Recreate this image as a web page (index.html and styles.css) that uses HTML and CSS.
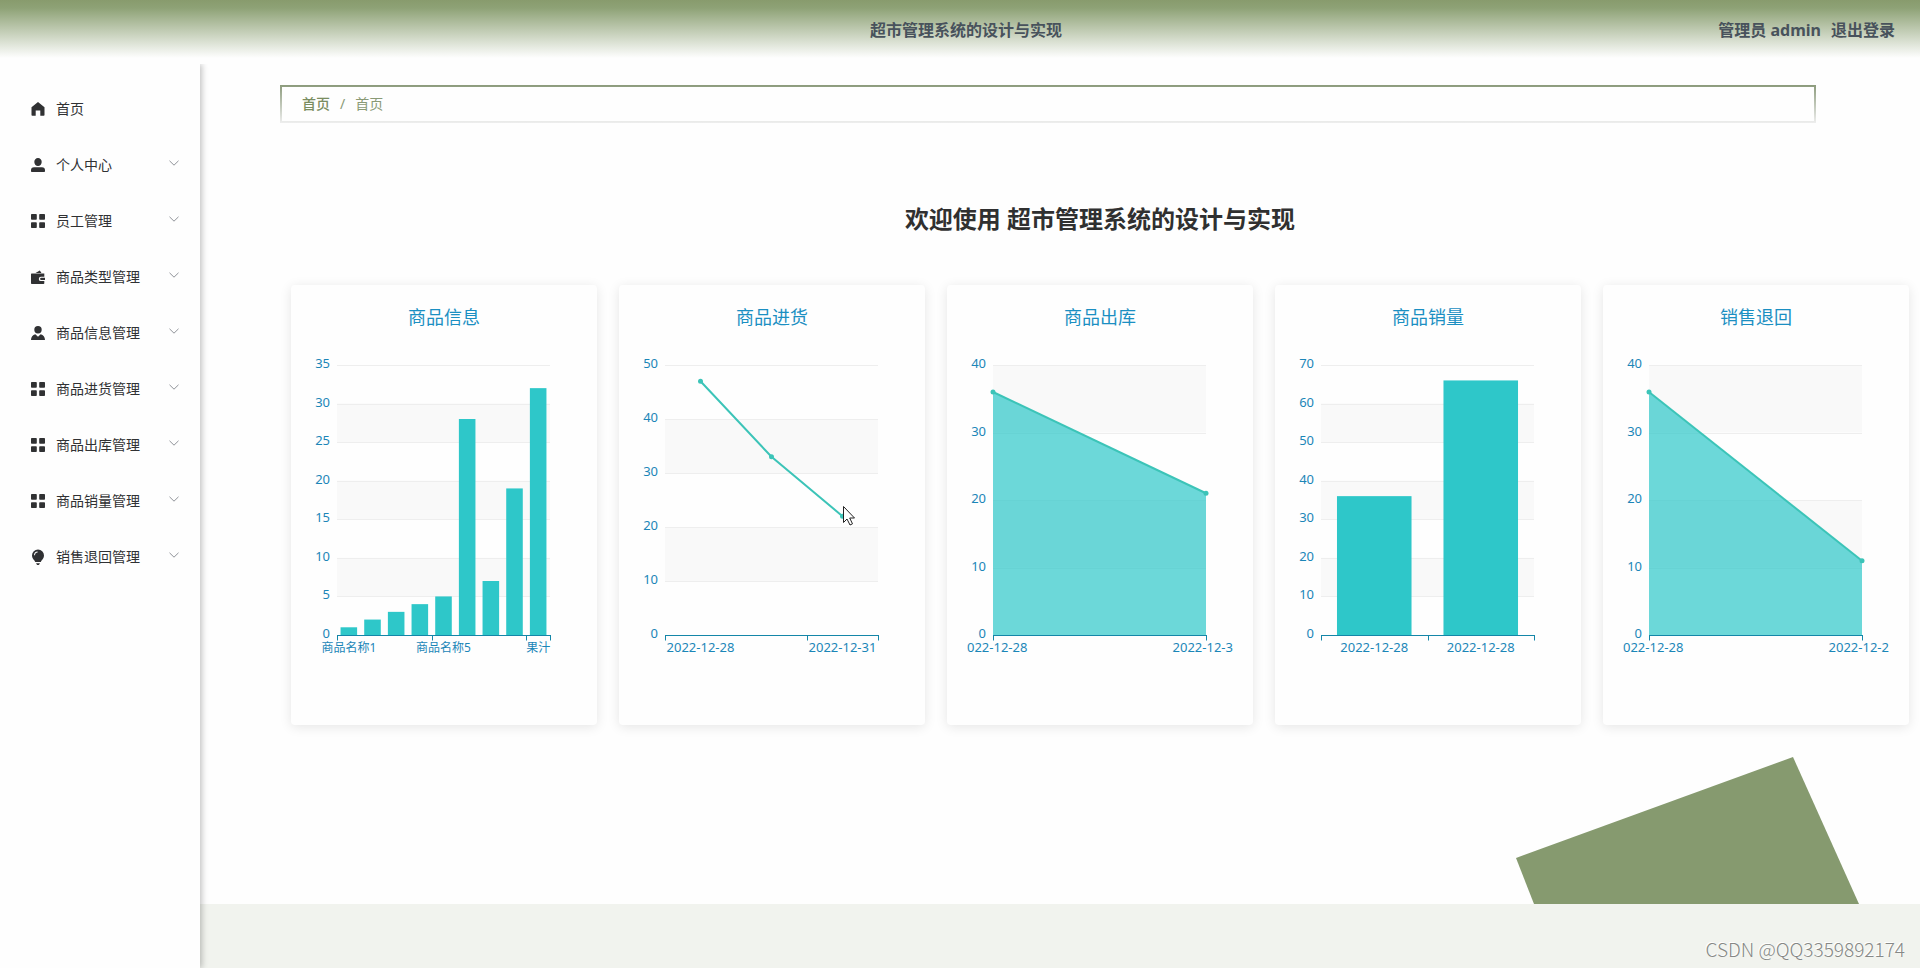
FILE: index.html
```html
<!DOCTYPE html>
<html lang="zh-CN">
<head>
<meta charset="utf-8">
<meta name="viewport" content="width=device-width, initial-scale=1">
<title>超市管理系统的设计与实现</title>
<link rel="stylesheet" href="styles.css">
</head>
<body>
<svg class="sprite" aria-hidden="true">
  <symbol id="i-home" viewBox="0 0 16 16"><path d="M8 1 1.500 6.200V14a.8.8 0 0 0 .8.8h3.400V9.600h4.600v5.200h3.400a.8.8 0 0 0 .8-.8V6.200z"/></symbol>
  <symbol id="i-user" viewBox="0 0 16 16"><path d="M8 1a3.7 3.7 0 0 1 3.7 3.9C11.700 7.200 10 9 8 9S4.300 7.200 4.300 4.900A3.700 3.700 0 0 1 8 1zM4 10.200h8a3 3 0 0 1 3 3v1a.8.8 0 0 1-.8.8H1.800a.8.800 0 0 1-.8-.8v-1a3 3 0 0 1 3-3z"/></symbol>
  <symbol id="i-grid" viewBox="0 0 16 16"><path d="M1.800 1h4.200a.8.8 0 0 1 .8.8v4.200a.8.8 0 0 1-.8.8H1.800a.8.8 0 0 1-.8-.8V1.800A.8.8 0 0 1 1.800 1zm8.200 0h4.200a.8.8 0 0 1 .8.800v4.200a.8.8 0 0 1-.8.800H10a.8.8 0 0 1-.8-.8V1.800A.8.8 0 0 1 10 1zM1.800 9.200h4.200a.8.8 0 0 1 .8.800v4.200a.8.8 0 0 1-.8.800H1.800a.8.8 0 0 1-.8-.8V10a.8.8 0 0 1 .8-.8zm8.200 0h4.200a.8.8 0 0 1 .8.800v4.200a.8.8 0 0 1-.8.800H10a.8.8 0 0 1-.8-.8V10a.8.8 0 0 1 .8-.8z"/></symbol>
  <symbol id="i-wallet" viewBox="0 0 16 16"><path d="M5.500 4 9.800 1.600 11.500 4zM1.600 4.600H14.300V7.700H11a2.200 2.200 0 0 0 0 4.400h3.300v2.100a.8.8 0 0 1-.8.8H1.800a.8.8 0 0 1-.8-.8V5.200a.6.6 0 0 1 .6-.6zM11.200 8.800H15V11h-3.800a1.100 1.100 0 0 1 0-2.200z"/></symbol>
  <symbol id="i-staff" viewBox="0 0 16 16"><path d="M8 1a3.700 3.700 0 0 1 3.700 3.700A3.700 3.700 0 0 1 8 8.400a3.700 3.700 0 0 1-3.700-3.700A3.700 3.700 0 0 1 8 1zM5.300 9.200 8 11.800l2.700-2.600c2.600.8 4.300 2.800 4.300 5.800H1c0-3 1.700-5 4.300-5.800z"/></symbol>
  <symbol id="i-bulb" viewBox="0 0 16 16"><path fill-rule="evenodd" d="M8 .5a6 6 0 0 1 6 6c0 2.500-1.500 3.800-2.600 5.300L10.800 13H5.200l-.6-1.200C3.500 10.300 2 9 2 6.500a6 6 0 0 1 6-6zM4 6.200h1C5.100 4.500 6 3.600 7.600 3.500v-1C5.400 2.600 4 4 4 6.200zM6.200 14.200h3.600v.6L8.800 16H7.200l-1-1.200z"/></symbol>
  <symbol id="i-down" viewBox="0 0 12 12"><path d="M1.500 3.800 6 8.200l4.500-4.400" fill="none" stroke="currentColor"/></symbol>
</svg>

<header class="topbar">
  <div class="topbar-title">超市管理系统的设计与实现</div>
  <div class="topbar-user">
    <span>管理员 admin</span>
    <a class="logout" href="#">退出登录</a>
  </div>
</header>

<div class="layout">
  <nav class="sidebar" aria-label="主菜单">
    <a class="menu-item" href="#"><svg class="menu-icon"><use href="#i-home"/></svg><span class="menu-text">首页</span></a>
    <button class="menu-item" type="button"><svg class="menu-icon"><use href="#i-user"/></svg><span class="menu-text">个人中心</span><svg class="menu-arrow"><use href="#i-down"/></svg></button>
    <button class="menu-item" type="button"><svg class="menu-icon"><use href="#i-grid"/></svg><span class="menu-text">员工管理</span><svg class="menu-arrow"><use href="#i-down"/></svg></button>
    <button class="menu-item" type="button"><svg class="menu-icon"><use href="#i-wallet"/></svg><span class="menu-text">商品类型管理</span><svg class="menu-arrow"><use href="#i-down"/></svg></button>
    <button class="menu-item" type="button"><svg class="menu-icon"><use href="#i-staff"/></svg><span class="menu-text">商品信息管理</span><svg class="menu-arrow"><use href="#i-down"/></svg></button>
    <button class="menu-item" type="button"><svg class="menu-icon"><use href="#i-grid"/></svg><span class="menu-text">商品进货管理</span><svg class="menu-arrow"><use href="#i-down"/></svg></button>
    <button class="menu-item" type="button"><svg class="menu-icon"><use href="#i-grid"/></svg><span class="menu-text">商品出库管理</span><svg class="menu-arrow"><use href="#i-down"/></svg></button>
    <button class="menu-item" type="button"><svg class="menu-icon"><use href="#i-grid"/></svg><span class="menu-text">商品销量管理</span><svg class="menu-arrow"><use href="#i-down"/></svg></button>
    <button class="menu-item" type="button"><svg class="menu-icon"><use href="#i-bulb"/></svg><span class="menu-text">销售退回管理</span><svg class="menu-arrow"><use href="#i-down"/></svg></button>
  </nav>

  <div class="page">
    <main class="content">
      <svg class="decoration" viewBox="0 0 343 147" aria-hidden="true"><path d="M0 101 277 0 343 147H18z"/></svg>
      <nav class="breadcrumb" aria-label="面包屑">
        <a class="crumb-link" href="#">首页</a>
        <span class="crumb-sep">/</span>
        <span class="crumb-current">首页</span>
      </nav>
      <h1 class="welcome">欢迎使用 超市管理系统的设计与实现</h1>
      <section class="cards">
        <article class="card" data-chart="info"><h2 class="card-title">商品信息</h2></article>
        <article class="card" data-chart="purchase"><h2 class="card-title">商品进货</h2></article>
        <article class="card" data-chart="outbound"><h2 class="card-title">商品出库</h2></article>
        <article class="card" data-chart="sales"><h2 class="card-title">商品销量</h2></article>
        <article class="card" data-chart="returns"><h2 class="card-title">销售退回</h2></article>
      </section>
    </main>
    <footer class="footer">CSDN @QQ3359892174</footer>
  </div>
</div>
<script src="charts.js"></script>
</body>
</html>
```

FILE: styles.css
```css
* {
  box-sizing: border-box;
}

body {
  display: flex;
  flex-direction: column;
  min-height: 100vh;
  margin: 0;
  background: #fefefe;
  color: #333;
  font-family: "Noto Sans", "Noto Sans CJK SC", sans-serif;
  font-size: 14px;
}

a {
  color: inherit;
  text-decoration: none;
}

.sprite {
  position: absolute;
  width: 0;
  height: 0;
}

.topbar {
  display: grid;
  grid-template-columns: 1fr auto 1fr;
  align-items: center;
  height: 60px;
  padding: 0 25px 2px 37px;
  background: linear-gradient(to bottom, #889b6d 0, #8ea276 8px, #fefefe 58px);
  color: #48525c;
  font-size: 16px;
  font-weight: 700;
}

.topbar-title {
  grid-column: 2;
}

.topbar-user {
  display: flex;
  justify-content: flex-end;
  gap: 10px;
}

.layout {
  display: flex;
  flex: 1;
  padding-top: 4px;
}

.sidebar {
  z-index: 1;
  flex: 0 0 200px;
  padding-top: 17px;
  background: #fefefe;
  box-shadow: 2px 0 6px rgba(0, 0, 0, 0.24);
  clip-path: inset(0 -12px 0 0);
}

.menu-item {
  display: flex;
  align-items: center;
  width: 100%;
  height: 56px;
  padding: 0 20px 0 30px;
  border: 0;
  background: none;
  color: #303133;
  font: inherit;
  cursor: pointer;
}

.menu-icon {
  width: 16px;
  height: 16px;
  margin-right: 10px;
  fill: currentColor;
}

.menu-text {
  padding-bottom: 2px;
}

.menu-arrow {
  width: 12px;
  height: 12px;
  margin: 0 0 4px auto;
  color: #909399;
}

.page {
  display: flex;
  flex: 1;
  flex-direction: column;
  min-width: 0;
}

.content {
  position: relative;
  flex: 1;
  padding: 21px 0 0 80px;
}

.decoration {
  position: absolute;
  right: 61px;
  bottom: 0;
  width: 343px;
  fill: #869a6f;
}

.breadcrumb {
  display: flex;
  align-items: center;
  gap: 10px;
  height: 38px;
  margin-right: 104px;
  padding: 0 20px 2px;
  border: 2px solid;
  border-image: linear-gradient(to bottom, #8c9b7c, #eee) 2;
  color: #8a9a76;
}

.crumb-link {
  color: #7a8d60;
  font-weight: 500;
}

.welcome {
  margin: 77px 0 47px;
  color: #303030;
  font-size: 24px;
  font-weight: 700;
  line-height: 38px;
  text-align: center;
}

.cards {
  position: relative;
  display: grid;
  grid-template-columns: repeat(5, minmax(0, 1fr));
  gap: 22px;
  padding: 0 11px 40px;
}

.card {
  padding: 20px;
  border-radius: 4px;
  background: #fefefe;
  box-shadow: 0 2px 12px rgba(0, 0, 0, 0.1);
}

.card-title {
  margin: 0 0 2px;
  color: #1b8fc2;
  font-size: 18px;
  font-weight: 400;
  line-height: 24px;
  text-align: center;
}

.chart {
  display: block;
  width: 100%;
}

.split-area {
  fill: #f9f9f9;
}

.split-line {
  stroke: #eee;
}

.axis-line {
  fill: none;
  stroke: #1486a8;
}

.axis-label {
  fill: #1b86b8;
  font-size: 13px;
}

.axis-name {
  font-size: 12px;
}

.bar {
  fill: #2ec7c9;
}

.area {
  fill: #2ec7c9;
  fill-opacity: 0.7;
}

.line {
  fill: none;
  stroke: #3cc4b8;
  stroke-width: 2;
}

.point {
  fill: #3cc4b8;
}

.pointer {
  fill: #fff;
  stroke: #222;
}

.footer {
  display: flex;
  align-items: center;
  justify-content: flex-end;
  height: 64px;
  padding: 24px 15px 0 0;
  background: #f1f3ee;
  color: #868886;
  font-family: "Noto Sans CJK SC", sans-serif;
  font-size: 19px;
  font-weight: 300;
  text-shadow: -1px -1px 0 #fff;
}
```

FILE: charts.js
```js
const NS = 'http://www.w3.org/2000/svg';
const VIEW = { width: 266, height: 374 };
const PLOT = { left: 26, right: 239, top: 34, bottom: 304 };

const charts = {
  info: {
    type: 'bar', max: 35, step: 5, values: [1, 2, 3, 4, 5, 28, 7, 19, 32],
    labels: { 0: '商品名称1', 4: '商品名称5', 8: '果汁' }, ticks: [0, 4, 8, 9], names: true
  },
  purchase: {
    type: 'line', max: 50, step: 10, values: [47, 33, 22],
    labels: { 0: '2022-12-28', 2: '2022-12-31' }, ticks: [0, 2, 3], pointer: [204, 175]
  },
  outbound: {
    type: 'area', max: 40, step: 10, values: [36, 21], edges: ['022-12-28', '2022-12-3']
  },
  sales: {
    type: 'bar', max: 70, step: 10, values: [36, 66],
    labels: { 0: '2022-12-28', 1: '2022-12-28' }, ticks: [0, 1, 2]
  },
  returns: {
    type: 'area', max: 40, step: 10, values: [36, 11], edges: ['022-12-28', '2022-12-2']
  }
};

function add(parent, tag, attrs, text) {
  const node = document.createElementNS(NS, tag);
  for (const key in attrs) node.setAttribute(key, attrs[key]);
  if (text !== undefined) node.textContent = text;
  parent.appendChild(node);
  return node;
}

function draw(card, c) {
  const svg = add(card, 'svg', { class: 'chart', viewBox: `0 0 ${VIEW.width} ${VIEW.height}`, role: 'img' });
  const width = PLOT.right - PLOT.left;
  const y = v => PLOT.bottom - (PLOT.bottom - PLOT.top) * v / c.max;
  const crisp = v => Math.round(v) + 0.5;

  for (let v = c.step; v < c.max; v += 2 * c.step) {
    add(svg, 'rect', { class: 'split-area', x: PLOT.left, width, y: y(v + c.step), height: y(v) - y(v + c.step) });
  }
  for (let v = 0; v <= c.max; v += c.step) {
    if (v) add(svg, 'path', { class: 'split-line', d: `M${PLOT.left} ${crisp(y(v))}H${PLOT.right}` });
    add(svg, 'text', { class: 'axis-label', x: PLOT.left - 7, y: Math.round(y(v)) + 3, 'text-anchor': 'end' }, v);
  }

  const band = width / c.values.length;
  const area = c.type === 'area';
  const x = i => area ? PLOT.left + width * i / (c.values.length - 1) : PLOT.left + band * (i + 0.5);

  if (c.type === 'bar') {
    c.values.forEach((v, i) => add(svg, 'rect', {
      class: 'bar', x: x(i) - band * 0.35, width: band * 0.7, y: y(v), height: PLOT.bottom - y(v)
    }));
  } else {
    const points = c.values.map((v, i) => `${x(i)} ${y(v)}`).join('L');
    if (area) add(svg, 'path', { class: 'area', d: `M${points}V${PLOT.bottom}H${PLOT.left}z` });
    add(svg, 'path', { class: 'line', d: `M${points}` });
    c.values.forEach((v, i) => add(svg, 'circle', { class: 'point', cx: x(i), cy: y(v), r: 2.5 }));
  }

  const base = PLOT.bottom + 0.5;
  add(svg, 'path', { class: 'axis-line', d: `M${PLOT.left} ${base}H${PLOT.right + 1}` });
  const ticks = area ? [PLOT.left, PLOT.right] : c.ticks.map(t => PLOT.left + band * t);
  ticks.forEach(t => add(svg, 'path', { class: 'axis-line', d: `M${crisp(t)} ${base}v5` }));

  const labelY = PLOT.bottom + 17;
  if (area) {
    add(svg, 'text', { class: 'axis-label', x: 0, y: labelY }, c.edges[0]);
    add(svg, 'text', { class: 'axis-label', x: VIEW.width, y: labelY, 'text-anchor': 'end' }, c.edges[1]);
  } else {
    for (const i in c.labels) {
      add(svg, 'text', {
        class: c.names ? 'axis-label axis-name' : 'axis-label', x: x(+i), y: labelY, 'text-anchor': 'middle'
      }, c.labels[i]);
    }
  }

  if (c.pointer) {
    const [px, py] = c.pointer;
    add(svg, 'path', { class: 'pointer', d: `M${px + 0.5} ${py + 0.5}v16l3.500-3.500 3 6 2.500-1.200-2.800-5.800h4.800z` });
  }
}

document.querySelectorAll('[data-chart]').forEach(card => draw(card, charts[card.dataset.chart]));
```
